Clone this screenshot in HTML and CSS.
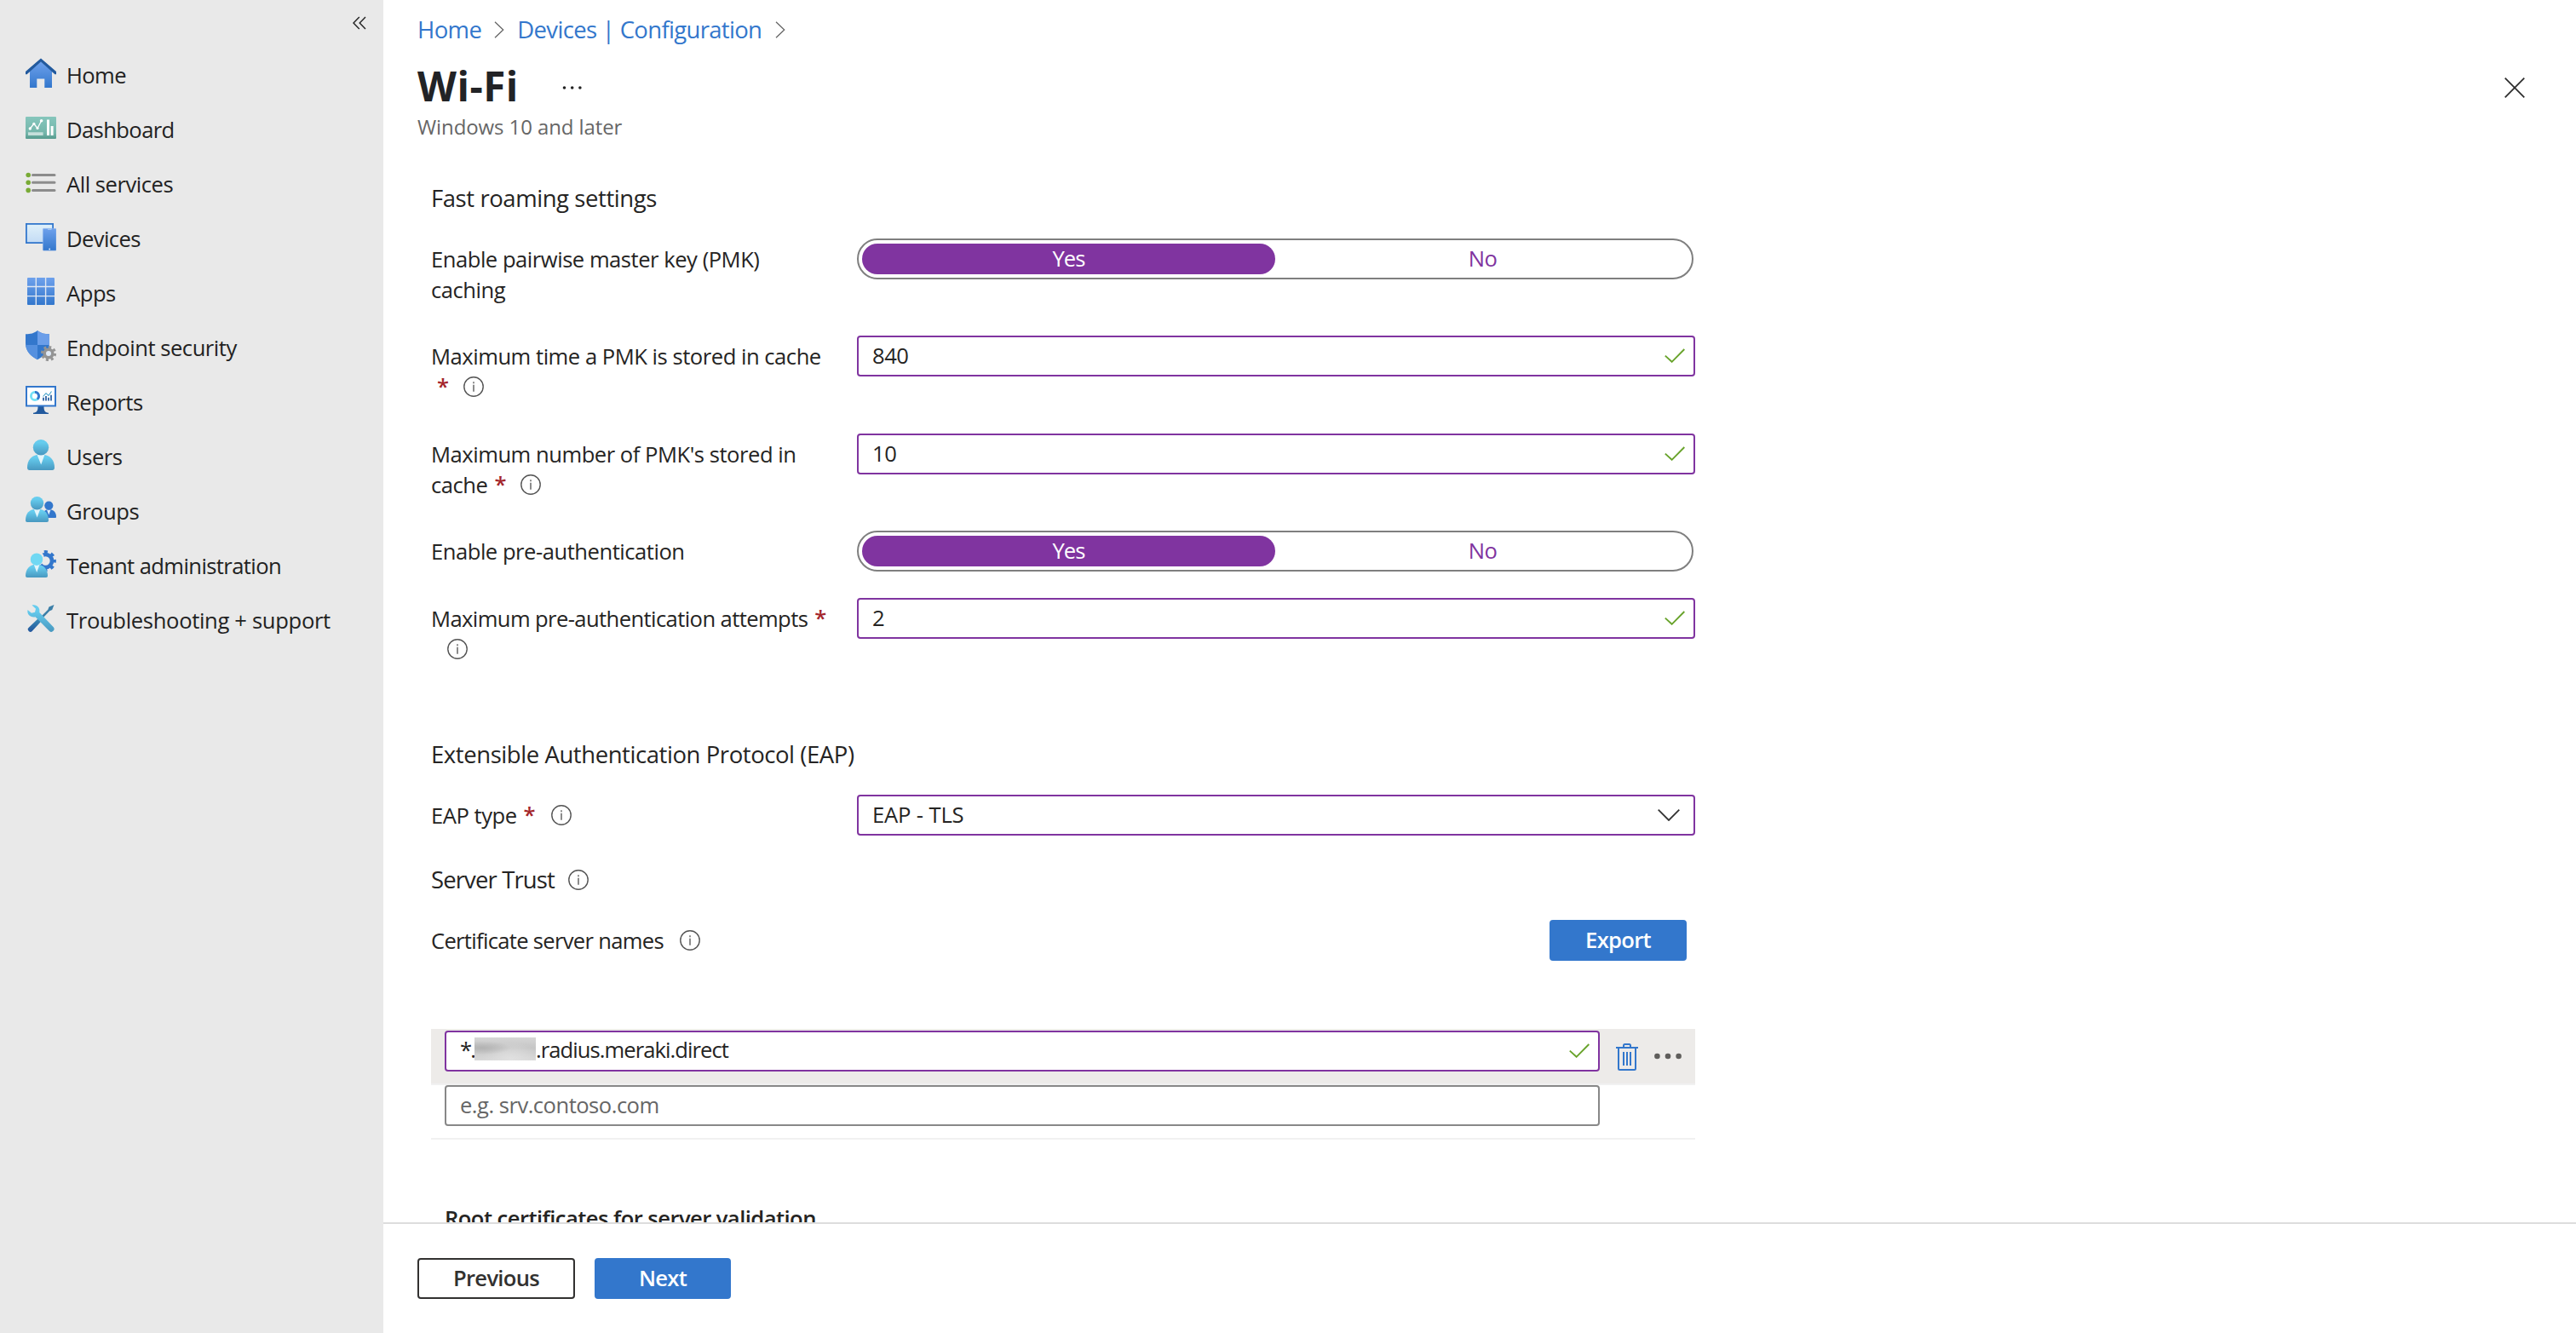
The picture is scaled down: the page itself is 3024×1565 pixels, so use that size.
FILE: index.html
```html
<!DOCTYPE html>
<html lang="en">
<head>
<meta charset="utf-8">
<title>Wi-Fi</title>
<link rel="stylesheet" href="styles.css">
</head>
<body>
<svg class="defs" width="0" height="0">
  <defs>
    <linearGradient id="blue" x1="0" y1="0" x2="0" y2="1"><stop offset="0" stop-color="#6ea1ec"/><stop offset="1" stop-color="#3377cc"/></linearGradient>
    <linearGradient id="cyan" x1="0" y1="0" x2="0" y2="1"><stop offset="0.2" stop-color="#66ccee"/><stop offset="1" stop-color="#4898c0"/></linearGradient>
    <linearGradient id="teal" x1="0" y1="0" x2="0" y2="1"><stop offset="0" stop-color="#86c6bc"/><stop offset="0.75" stop-color="#74b5aa"/><stop offset="1" stop-color="#559a8d"/></linearGradient>
    <linearGradient id="screen" x1="0" y1="0" x2="0" y2="1"><stop offset="0" stop-color="#e0f1fa"/><stop offset="1" stop-color="#c3dbf5"/></linearGradient>
    <linearGradient id="handle" x1="0" y1="0" x2="0" y2="1"><stop offset="0" stop-color="#3a8ab5"/><stop offset="1" stop-color="#22559c"/></linearGradient>
    <symbol id="info" viewBox="0 0 24 24"><circle cx="12" cy="12" r="11.2" fill="none" stroke="#555" stroke-width="1.4"/><path d="M12 9.8V17.8M12 6.3V8.2" stroke="#666" stroke-width="1.5" fill="none"/></symbol>
    <symbol id="check" viewBox="0 0 24 17"><path d="M.8 8.6 8.6 15.8 23.3 1" fill="none" stroke="#68a32b" stroke-width="1.9"/></symbol>
    <symbol id="crumb" viewBox="0 0 12 20"><path d="M1 .7 10.7 10 1 19.3" fill="none" stroke="#666" stroke-width="1.3"/></symbol>
  </defs>
</svg>
<div class="app">
  <nav class="sidebar">
    <svg class="collapse" viewBox="0 0 16 16"><path d="M7.8 1 1 8l6.8 7M15 1 8.2 8l6.8 7" fill="none" stroke="#222" stroke-width="1.4"/></svg>
    <ul class="menu">
      <li><svg viewBox="0 0 36 36"><path d="M5 15.5 18 4l13 11.5V35h-8.7V24.5h-9V35H5Z" fill="url(#blue)"/><path d="M18 .5 36 16v3.2h-1.6L18 4.6 1.6 19.2H0V16Z" fill="#225a9e"/></svg><span class="t-tight">Home</span></li>
      <li><svg viewBox="0 0 36 36"><rect y="5" width="36" height="26" rx="1" fill="url(#teal)"/><path d="M5.3 19 9.8 13.3 14 18.5 18.6 9.7" fill="none" stroke="#fff" stroke-width="1.3"/><g fill="#fff"><circle cx="5.3" cy="19" r="1.7"/><circle cx="9.8" cy="13.3" r="1.6"/><circle cx="14" cy="18.5" r="1.6"/><circle cx="18.6" cy="9.7" r="1.8"/><rect x="25" y="8.5" width="3" height="18.5"/><rect x="29.6" y="16" width="3" height="11"/><rect x="3" y="23.3" width="17.6" height="3.7" opacity=".6"/></g></svg><span class="t-tight">Dashboard</span></li>
      <li><svg viewBox="0 0 36 36"><g fill="#79ab36"><circle cx="3.2" cy="9.5" r="2.8"/><circle cx="3.2" cy="18.3" r="2.8"/><circle cx="3.2" cy="27.4" r="2.8"/></g><path d="M8.5 9.5H34M8.5 18.3H34M8.5 27.4H34" stroke="#8c8c8c" stroke-width="3" stroke-linecap="round"/></svg><span>All services</span></li>
      <li><svg viewBox="0 0 36 36"><rect x=".9" y="2.9" width="31.2" height="22.2" fill="url(#screen)" stroke="#3377cc" stroke-width="1.8"/><rect x="20.3" y="8.2" width="15.7" height="26" rx=".8" fill="url(#blue)" stroke="#a9c6f0" stroke-width=".4"/><rect x="26" y="8.8" width="4.5" height=".9" fill="#b6d0f4"/><circle cx="28.2" cy="32.5" r=".9" fill="#e6f0fb"/></svg><span class="t-tight">Devices</span></li>
      <li><svg viewBox="0 0 36 36"><rect x="2" y="2" width="32" height="32" rx="1" fill="url(#blue)"/><path d="M12.3 2V34M23.6 2V34M2 12.5H34M2 23.6H34" stroke="#e0e7f1" stroke-width="1.4"/></svg><span>Apps</span></li>
      <li><svg viewBox="0 0 36 36"><path d="M14 0C18 3.4 22 4.3 28 4.3V15C28 24 22 30 14 34.2 6 30 0 24 0 15V4.3C6 4.3 10 3.4 14 0Z" fill="#3377cc"/><path d="M14 0C18 3.4 22 4.3 28 4.3V17H14Z" fill="#6b9ee9"/><path d="M14 17V34.2C6.5 30.3 1 25 .2 17Z" fill="#5590df"/><circle cx="27" cy="27" r="7.6" fill="none" stroke="#949494" stroke-width="3" stroke-dasharray="2.985"/><circle cx="27" cy="27" r="4.8" fill="#e0eaf7" stroke="#949494" stroke-width="3.6"/></svg><span>Endpoint security</span></li>
      <li><svg viewBox="0 0 36 36"><path d="M14.5 25h7c0 5 1 7.2 5.5 7.8V34H9v-1.2c4.5-.6 5.5-2.8 5.500-7.8Z" fill="#225a9e"/><rect x="1" y="2" width="34" height="22.5" fill="#fff" stroke="#3377cc" stroke-width="2"/><circle cx="11" cy="13" r="4.6" fill="none" stroke="#72e0f6" stroke-width="2.8"/><path d="M11 8.4A4.6 4.6 0 0 1 13.8 16.6" fill="none" stroke="#3377cc" stroke-width="2.8"/><path d="M21 18.5V14.8M24 18.5V13M27 18.5V14.8M30 18.5V11.8" stroke="#225a9e" stroke-width="1.7"/><path d="M20.5 13.5 24 9.7 27 12.5 30.5 7.5" stroke="#3f9fc8" stroke-width="1.1" fill="none"/></svg><span>Reports</span></li>
      <li><svg viewBox="0 0 36 36"><path d="M2 33C2 24 7 17.5 18 17.5S34 24 34 33C34 35 33 36 31.5 36H4.5C3 36 2 35 2 33Z" fill="url(#cyan)"/><path d="M13.5 17.8H22.5L18.2 29.5Z" fill="#e3f5fb"/><circle cx="18" cy="9.2" r="9.2" fill="url(#cyan)"/></svg><span>Users</span></li>
      <li><svg viewBox="0 0 36 36"><path d="M20 28C20 22 22 18 27.5 18S36 22 36 26.5C36 27.5 35.5 28 34.8 28Z" fill="#3377cc"/><path d="M25 18.5H29.5L27.3 24.5Z" fill="#e3f0fb"/><circle cx="27.3" cy="13.6" r="5.1" fill="#3377cc"/><path d="M0 31C0 23 4 17.5 13.5 17.5S27 23 27 31C27 32.3 26.3 33 25 33H2C.7 33 0 32.3 0 31Z" fill="url(#cyan)"/><path d="M9.8 17.8H17.2L13.6 27.5Z" fill="#e3f5fb"/><circle cx="13.5" cy="10.7" r="7.7" fill="url(#cyan)"/></svg><span>Groups</span></li>
      <li><svg viewBox="0 0 36 36"><circle cx="23.5" cy="14.5" r="10.6" fill="none" stroke="#3377cc" stroke-width="3.6" stroke-dasharray="4.163" stroke-dashoffset="2.08"/><circle cx="23.5" cy="14.5" r="7.5" fill="none" stroke="#3377cc" stroke-width="4.6"/><circle cx="13" cy="11.5" r="9" fill="#e9e9e9"/><path d="M0 32C0 25 4 18.5 13 18.5S26 25 26 32C26 33.3 25.3 34 24 34H2C.7 34 0 33.3 0 32Z" fill="url(#cyan)"/><path d="M9.6 18.5H16.6L13.2 28Z" fill="#e3f5fb"/><circle cx="13" cy="12.7" r="7.2" fill="#70d8f3"/></svg><span class="t-tight">Tenant administration</span></li>
      <li><svg viewBox="0 0 36 36"><path d="M33.5 2 27.5 4.5 26.3 7.7 16.5 17.5 18.5 19.5 28.3 9.3 31.2 8Z" fill="#3c7fa8"/><path d="M14.5 18.5 17.8 22 7.5 33.2Q5.8 34.8 4 33.2L3.2 32.2Q1.8 30.5 3.5 29Z" fill="url(#handle)"/><path d="M7.5 2.5C12.5 1 17.5 5 16.3 11L33 28.5Q34.5 30.5 33 32.2L31.8 33.3Q30 34.8 28 33L11.5 16.3C6 17.5 1.2 13 2.5 8L7 11.8 11 10.8 12 6.8Z" fill="url(#cyan)"/></svg><span class="t-loose">Troubleshooting + support</span></li>
    </ul>
  </nav>

  <main class="blade">
    <header class="head">
      <div class="crumbs"><a class="c1">Home</a><svg><use href="#crumb"/></svg><a class="c2">Devices | Configuration</a><svg><use href="#crumb"/></svg></div>
      <div class="titlerow">
        <h1>Wi-Fi</h1>
        <svg class="more" viewBox="0 0 24 6"><g fill="#222"><circle cx="2.5" cy="3" r="1.8"/><circle cx="11.7" cy="3" r="1.8"/><circle cx="20.9" cy="3" r="1.8"/></g></svg>
        <svg class="close" viewBox="0 0 24 24"><path d="M.7.7 23.3 23.3M23.3.7.7 23.3" stroke="#2b2b2b" stroke-width="1.7"/></svg>
      </div>
      <div class="subtitle">Windows 10 and later</div>
    </header>

    <div class="content">
      <h2>Fast roaming settings</h2>
      <div class="row r114">
        <div class="label"><div>Enable pairwise master key (PMK)</div><div>caching</div></div>
        <div class="toggle"><span class="on">Yes</span><span class="off">No</span></div>
      </div>
      <div class="row r115">
        <div class="label"><div>Maximum time a PMK is stored in cache</div><div><b class="lead">*</b><svg class="info"><use href="#info"/></svg></div></div>
        <div class="field">840<svg><use href="#check"/></svg></div>
      </div>
      <div class="row r114">
        <div class="label"><div>Maximum number of PMK's stored in</div><div>cache<b>*</b><svg class="info"><use href="#info"/></svg></div></div>
        <div class="field">10<svg><use href="#check"/></svg></div>
      </div>
      <div class="row r79">
        <div class="label"><div>Enable pre-authentication</div></div>
        <div class="toggle"><span class="on">Yes</span><span class="off">No</span></div>
      </div>
      <div class="row r165">
        <div class="label"><div class="t-tight">Maximum pre-authentication attempts<b>*</b></div><div><svg class="info"><use href="#info"/></svg></div></div>
        <div class="field">2<svg><use href="#check"/></svg></div>
      </div>
      <h2>Extensible Authentication Protocol (EAP)</h2>
      <div class="row r81">
        <div class="label"><div>EAP type<b>*</b><svg class="info far"><use href="#info"/></svg></div></div>
        <div class="field select"><span class="value">EAP - TLS</span><svg viewBox="0 0 26 14"><path d="M.7.7 13 13 25.3.7" fill="none" stroke="#333" stroke-width="1.8"/></svg></div>
      </div>
      <h2 class="trust">Server Trust<svg class="info"><use href="#info"/></svg></h2>
      <div class="row r128">
        <div class="label"><div class="t-tighter">Certificate server names<svg class="info"><use href="#info"/></svg></div></div>
        <div class="action"><button class="btn primary export">Export</button></div>
      </div>
      <div class="table">
        <div class="line active">
          <div class="field"><span class="star">*.</span><i class="redacted"></i><span class="domain">.radius.meraki.direct</span><svg><use href="#check"/></svg></div>
          <svg class="trash" viewBox="0 0 26 32"><g fill="none" stroke="#3377cc" stroke-width="2"><path d="M0 5H26M3 5V29.5Q3 31 4.5 31H21.5Q23 31 23 29.5V5M9 5V2.5Q9 1 10.5 1H15.5Q17 1 17 2.5V5M9 10V26M13 10V26M17 10V26"/></g></svg>
          <svg class="dots" viewBox="0 0 32 8"><g fill="#605e5c"><circle cx="3.4" cy="4" r="3.3"/><circle cx="16" cy="4" r="3.3"/><circle cx="28.6" cy="4" r="3.3"/></g></svg>
        </div>
        <div class="line"><div class="field empty">e.g. srv.contoso.com</div></div>
      </div>
      <h3>Root certificates for server validation</h3>
    </div>

    <footer class="foot"><button class="btn prev">Previous</button><button class="btn primary next">Next</button></footer>
  </main>
</div>
</body>
</html>
```
FILE: styles.css
```css
* { box-sizing: border-box; }
body { margin: 0; background: #fff; color: #252423; font: 25.6px/36px "Open Sans", "Noto Sans", sans-serif; letter-spacing: -0.48px; }
svg { display: block; flex: none; }
.defs { position: absolute; }
.app { display: flex; height: 1565px; width: 3024px; overflow: hidden; }

.sidebar { width: 450px; flex: none; background: #e9e9e9; display: flex; flex-direction: column; }
.collapse { width: 16px; height: 16px; margin: 19px 20px 0 auto; }
.menu { list-style: none; margin: 20px 0 0; padding: 0 0 0 30px; color: #222; }
.menu li { height: 64px; display: flex; align-items: center; gap: 12px; }
.menu li svg { width: 36px; height: 36px; margin-bottom: 2px; }
.menu li span { padding-top: 4px; }
.t-tight { letter-spacing: -0.6px; }
.t-tighter { letter-spacing: -0.7px; }
.t-loose { letter-spacing: -0.33px; }

.blade { flex: 1; min-width: 0; display: flex; flex-direction: column; }
.head { height: 165px; flex: none; padding: 17px 60px 0 40px; }
.crumbs { display: flex; align-items: center; height: 36px; font-size: 27.5px; color: #3377cc; }
.crumbs svg { width: 12px; height: 20px; margin-bottom: 1px; }
.c1 { letter-spacing: -0.6px; margin-right: 15px; }
.c2 { letter-spacing: -0.68px; margin: 0 16px 0 15px; }
.titlerow { display: flex; align-items: center; height: 64px; margin-top: 16px; }
h1 { margin: 0; font-size: 47.5px; line-height: 64px; font-weight: 700; letter-spacing: 0.5px; color: #222326; }
.more { width: 24px; height: 6px; margin: 4px 0 0 51px; }
.close { width: 24px; height: 24px; margin: 4px 0 0 auto; }
.subtitle { font-size: 24px; line-height: 32px; letter-spacing: -0.1px; color: #666; }

.content { flex: 1; min-height: 0; overflow: hidden; padding: 50px 0 0 56px; }
h2 { margin: 0 0 29px; font-size: 27.5px; line-height: 36px; font-weight: 400; letter-spacing: -0.43px; }
.row { display: grid; grid-template-columns: 500px 984px; align-items: start; }
.row + h2 { margin-top: 1px; }
.r79 { height: 79px; }
.r81 { height: 81px; }
.r114 { height: 114px; }
.r115 { height: 115px; }
.r128 { height: 128px; }
.r165 { height: 165px; }
.label { padding-top: 7px; }
.label > div { display: flex; align-items: center; height: 36px; white-space: nowrap; }
.label b { color: #a4262c; font-weight: 600; margin: 0 0 2px 8px; width: 12px; }
.info { width: 24px; height: 24px; margin: 0 0 2px 19px; }
.label .lead { margin-left: 7px; }
.info.far { margin-left: 20px; }

.toggle { display: flex; width: 982px; height: 48px; padding: 4px; border: 2px solid #7f7f7f; border-radius: 24px; line-height: 36px; text-align: center; }
.toggle .on { width: 485px; border-radius: 18px; background: #8034a0; color: #fff; letter-spacing: -1px; }
.toggle .off { flex: 1; padding-left: 2px; color: #8034a0; }
.field { display: flex; align-items: center; width: 984px; height: 48px; padding: 0 10px 1px 16px; border: 2px solid #8034a0; border-radius: 4px; background: #fff; }
.field svg { width: 24px; height: 17px; margin: 0 0 0 auto; }
.field.select { padding-right: 16px; padding-bottom: 0; }
.field.select svg { width: 26px; height: 14px; }
.value { letter-spacing: -0.15px; }
.trust { display: flex; align-items: center; letter-spacing: -0.88px; }
.trust .info { margin-left: 16px; margin-bottom: 0; }
.action { display: flex; justify-content: flex-end; padding-right: 10px; }

.btn { height: 48px; padding: 0; border: 2px solid #323130; border-radius: 4px; background: #fff; color: #323130; font: 600 25.6px/40px "Open Sans", "Noto Sans", sans-serif; letter-spacing: -0.7px; }
.primary { background: #3377cc; border-color: #3377cc; color: #fff; }
.export { width: 161px; }
.prev { width: 185px; }
.next { width: 160px; }

.table { width: 1484px; }
.line { display: flex; height: 64px; padding-left: 16px; border-bottom: 2px solid #f1f1f1; }
.line.active { height: 66px; padding-top: 2px; background: #edebe9 padding-box; }
.line .field { width: 1356px; padding-bottom: 2px; padding-left: 16px; }
.line .empty { border-color: #888; color: #666; letter-spacing: -0.52px; padding-bottom: 0; }
.trash { width: 26px; height: 32px; margin: 15px 0 0 19px; }
.dots { width: 32px; height: 8px; margin: 26px 0 0 19px; }
.star { width: 17px; letter-spacing: -1.8px; }
.redacted { width: 72px; height: 27px; margin-bottom: 3px; background: radial-gradient(ellipse at 12% 45%, #b3b3b3 0, rgba(190, 190, 190, 0) 38%), radial-gradient(ellipse at 60% 95%, #e0e0e0 0, rgba(224, 224, 224, 0) 55%), linear-gradient(#d6d6d6, #c6c6c6 45%, #d8d8d8); }
.domain { letter-spacing: -0.95px; }
h3 { margin: 75px 0 0 16px; font-size: 25.6px; line-height: 36px; font-weight: 600; letter-spacing: -0.56px; }

.foot { flex: none; display: flex; gap: 23px; height: 130px; padding: 40px 0 0 40px; border-top: 2px solid #ddd; }
```
